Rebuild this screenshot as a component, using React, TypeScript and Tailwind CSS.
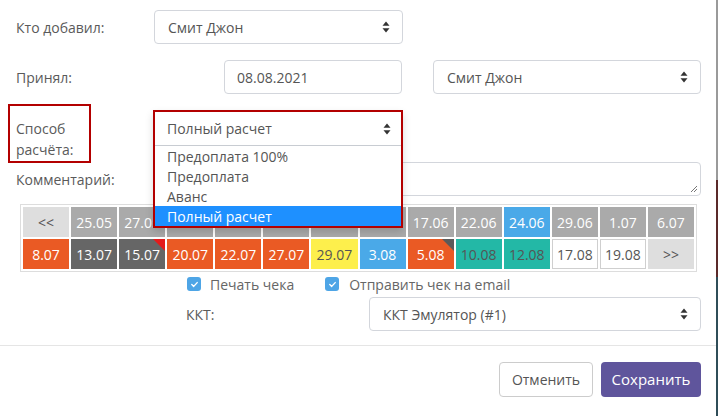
import React from 'react'

const font = { fontFamily: '"Open Sans", "Noto Sans", sans-serif' }

function Arrows() {
  return (
    <svg width="8" height="12" viewBox="0 0 8 12" className="shrink-0">
      <path d="M4 0.5 L7.5 4.8 H0.5 Z" fill="#333" />
      <path d="M4 11.5 L7.5 7.2 H0.5 Z" fill="#333" />
    </svg>
  )
}

function Select({ value, className = '' }: { value: string; className?: string }) {
  return (
    <div className={`h-[34px] border border-[#d3d6dc] rounded-[4px] bg-white flex items-center justify-between pl-[13px] pr-[12px] text-[14px] text-[#555] ${className}`}>
      <span>{value}</span>
      <Arrows />
    </div>
  )
}

function Check() {
  return (
    <span className="w-[14px] h-[14px] rounded-[3px] bg-[#4ea5e6] flex items-center justify-center shrink-0">
      <svg width="9" height="9" viewBox="0 0 9 9">
        <path d="M1.8 4.6 L3.7 6.4 L7.2 2.6" fill="none" stroke="#fff" strokeWidth="1.4" strokeLinecap="round" strokeLinejoin="round" />
      </svg>
    </span>
  )
}

type Cell = { t: string; c: string; corner?: string }

const G = 'bg-[#aaaaaa] text-white'
const NAV = 'bg-[#dedede] text-[#555] text-[12px]'
const OR = 'bg-[#ea5a24] text-white'
const DG = 'bg-[#666666] text-white'
const BL = 'bg-[#4aa9e8] text-white'
const YE = 'bg-[#fdef4c] text-[#555]'
const TE = 'bg-[#23b8a6] text-[#555]'
const WH = 'bg-white text-[#555] border border-[#cfcfcf]'

// ячейки 4–8 первой строки закрыты выпадающим списком
const row1: Cell[] = [
  { t: '<<', c: NAV }, { t: '25.05', c: G }, { t: '27.05', c: G }, { t: '', c: G },
  { t: '', c: G }, { t: '', c: G }, { t: '', c: G }, { t: '', c: G },
  { t: '17.06', c: G }, { t: '22.06', c: G }, { t: '24.06', c: BL }, { t: '29.06', c: G },
  { t: '1.07', c: G }, { t: '6.07', c: G },
]
const row2: Cell[] = [
  { t: '8.07', c: OR }, { t: '13.07', c: DG }, { t: '15.07', c: DG, corner: '#e41b1b' }, { t: '20.07', c: OR },
  { t: '22.07', c: OR }, { t: '27.07', c: OR }, { t: '29.07', c: YE }, { t: '3.08', c: BL },
  { t: '5.08', c: OR, corner: '#5a5a5a' }, { t: '10.08', c: TE }, { t: '12.08', c: TE }, { t: '17.08', c: WH },
  { t: '19.08', c: WH }, { t: '>>', c: NAV },
]

function DateCell({ cell }: { cell: Cell }) {
  return (
    <div className={`relative h-[30px] flex items-center justify-center text-[14px] ${cell.c}`}>
      {cell.t}
      {cell.corner && (
        <span
          className="absolute top-0 right-0 w-0 h-0 border-t-[12px] border-l-[12px] border-l-transparent"
          style={{ borderTopColor: cell.corner }}
        />
      )}
    </div>
  )
}

export default function App() {
  const options = ['Предоплата 100%', 'Предоплата', 'Аванс']
  return (
    <div className="w-[718px] h-[416px] flex bg-white overflow-hidden" style={font}>
      <div className="w-[716px] h-full bg-white flex flex-col text-[14px] text-[#5a5a5a]">
        <div className="pl-[16px] pr-[15px]">
          {/* Кто добавил */}
          <div className="flex items-center h-[34px] mt-[10px]">
            <div className="w-[138px]">Кто добавил:</div>
            <Select value="Смит Джон" className="w-[249px]" />
          </div>

          {/* Принял */}
          <div className="flex items-center h-[34px] mt-[16px]">
            <div className="w-[208px]">Принял:</div>
            <div className="w-[178px] h-[34px] border border-[#d3d6dc] rounded-[4px] flex items-center px-[12px] text-[#555]">08.08.2021</div>
            <Select value="Смит Джон" className="w-[268px] ml-[31px]" />
          </div>

          {/* Способ расчёта */}
          <div className="flex h-[36px] mt-[16px]">
            <div className="w-[138px] relative">
              <div className="mt-[8px] leading-[21px]">
                Способ<br />расчёта:
              </div>
              <div className="absolute left-[-8px] top-[-6px] w-[83px] h-[59px] border-2 border-[#b30000]" />
            </div>
            <div className="relative w-[249px]">
              <div className="absolute left-[-1px] top-0 w-[250px] border-2 border-[#b30000] bg-white z-10 shadow-[0_4px_8px_rgba(0,0,0,0.15)]">
                <div className="h-[34px] border-b border-[#c8ccd2] flex items-center justify-between pl-[12px] pr-[10px] text-[#555]">
                  <span>Полный расчет</span>
                  <Arrows />
                </div>
                {options.map(o => (
                  <div key={o} className="h-[20px] flex items-center pl-[12px] text-[#555]">{o}</div>
                ))}
                <div className="h-[20px] flex items-center pl-[12px] bg-[#1e90ff] text-white">Полный расчет</div>
              </div>
            </div>
          </div>

          {/* Комментарий */}
          <div className="flex items-center h-[34px] mt-[16px]">
            <div className="w-[138px]">Комментарий:</div>
            <div className="relative flex-1 h-[34px] border border-[#d3d6dc] rounded-[4px]">
              <svg width="8" height="8" viewBox="0 0 8 8" className="absolute right-[2px] bottom-[2px]">
                <path d="M7 1 L1 7 M7 4 L4 7" stroke="#777" strokeWidth="1" />
              </svg>
            </div>
          </div>

          {/* Календарь */}
          <div className="mt-[8px] ml-[4px] w-[677px] border border-[#dddddd] p-[2px] grid grid-cols-14 gap-[2px]">
            {row1.map((c, i) => <DateCell key={'a' + i} cell={c} />)}
            {row2.map((c, i) => <DateCell key={'b' + i} cell={c} />)}
          </div>

          {/* Чекбоксы */}
          <div className="flex items-center h-[20px] mt-[2px] pl-[171px]">
            <Check />
            <span className="ml-[9px] text-[#666]">Печать чека</span>
            <span className="ml-[31px]"><Check /></span>
            <span className="ml-[10px] text-[#666]">Отправить чек на email</span>
          </div>

          {/* ККТ */}
          <div className="flex items-center h-[34px] mt-[3px]">
            <div className="w-[353px] pl-[170px]">ККТ:</div>
            <Select value="ККТ Эмулятор (#1)" className="w-[332px]" />
          </div>
        </div>

        {/* Футер */}
        <div className="mt-[14px] border-t border-[#e5e5e5] flex justify-end gap-[8px] pt-[16px] pr-[15px]">
          <button className="w-[94px] h-[35px] border border-[#ccc] rounded-[4px] bg-white text-[#555] text-[14px]">Отменить</button>
          <button className="w-[100px] h-[35px] rounded-[4px] bg-[#5f559c] text-white text-[15px]">Сохранить</button>
        </div>
      </div>
      <div className="w-[2px] h-full flex flex-col">
        <div className="h-[180px] bg-[#9a9a9a]" />
        <div className="h-[97px] bg-[#5b2a2a]" />
        <div className="flex-1 bg-[#2f4d58]" />
      </div>
    </div>
  )
}
